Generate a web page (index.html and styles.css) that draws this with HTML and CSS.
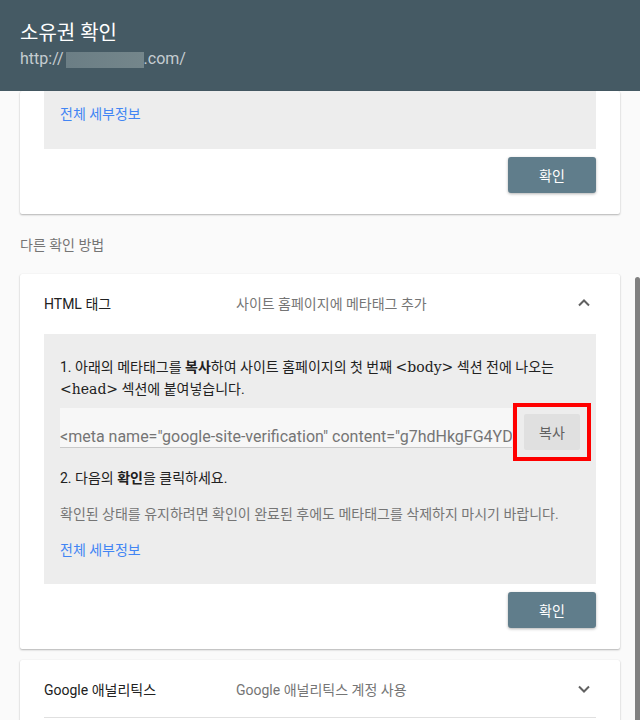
FILE: index.html
```html
<!DOCTYPE html>
<html lang="ko">
<head>
<meta charset="utf-8">
<link rel="stylesheet" href="styles.css">
</head>
<body>
<header class="topbar">
  <h1 class="title">소유권 확인</h1>
  <div class="url">http://<span class="blur"></span>.com/</div>
</header>
<main class="content">
  <section class="card">
    <div class="panel panel-top">
      <a class="link" href="#">전체 세부정보</a>
    </div>
    <div class="actions"><button class="btn">확인</button></div>
  </section>

  <div class="section-label">다른 확인 방법</div>

  <section class="card">
    <div class="card-head card-head-open">
      <span class="head-name">HTML 태그</span>
      <span class="head-desc">사이트 홈페이지에 메타태그 추가</span>
      <svg class="chev" width="14" height="14" viewBox="0 0 14 14"><path d="M2 9.5 L7 4.5 L12 9.5" fill="none" stroke="#616161" stroke-width="2"/></svg>
    </div>
    <div class="panel panel-main">
      <p class="step">1. 아래의 메타태그를 <b>복사</b>하여 사이트 홈페이지의 첫 번째 <code>&lt;body&gt;</code> 섹션 전에 나오는 <code>&lt;head&gt;</code> 섹션에 붙여넣습니다.</p>
      <div class="copy-row">
        <div class="field">&lt;meta name="google-site-verification" content="g7hdHkgFG4YDqz1Lx9w0uTnR5sKpQe2aVbMcXyZ3iO8" /&gt;</div>
        <div class="copy-wrap">
          <button class="copy-btn">복사</button>
          <span class="highlight"></span>
        </div>
      </div>
      <p class="step step2">2. 다음의 <b>확인</b>을 클릭하세요.</p>
      <p class="note">확인된 상태를 유지하려면 확인이 완료된 후에도 메타태그를 삭제하지 마시기 바랍니다.</p>
      <a class="link" href="#">전체 세부정보</a>
    </div>
    <div class="actions"><button class="btn">확인</button></div>
  </section>

  <section class="card card-collapsed">
    <div class="card-head card-head-border">
      <span class="head-name">Google 애널리틱스</span>
      <span class="head-desc">Google 애널리틱스 계정 사용</span>
      <svg class="chev" width="14" height="14" viewBox="0 0 14 14"><path d="M2 4.5 L7 9.5 L12 4.5" fill="none" stroke="#616161" stroke-width="2"/></svg>
    </div>
    <div class="spacer"></div>
  </section>
</main>
<div class="scroll-thumb"></div>
</body>
</html>
```

FILE: styles.css
```css
html, body {
  margin: 0;
  padding: 0;
  height: 720px;
  overflow: hidden;
}
body {
  background: #fafafa;
  font-family: Roboto, "Noto Sans CJK KR", sans-serif;
  color: #212121;
  position: relative;
}
.topbar {
  background: #455a64;
  height: 91px;
  box-sizing: border-box;
  padding: 19px 20px 0;
}
.title {
  margin: 0;
  font-size: 20px;
  line-height: 28px;
  font-weight: 400;
  color: #ffffff;
}
.url {
  font-size: 16px;
  line-height: 24px;
  color: #c5cdd1;
  display: flex;
  align-items: center;
}
.blur {
  display: inline-block;
  width: 78px;
  height: 16px;
  background: linear-gradient(90deg, #6b7e85, #74868b);
  margin: 2px 0 0 2px;
}
.content {
  padding: 0 20px;
}
.card {
  background: #ffffff;
  box-shadow: 0 1px 2px rgba(0,0,0,0.28), 0 0 1px rgba(0,0,0,0.08);
  border-radius: 2px;
  padding: 0 24px 21px;
  margin-bottom: 11px;
}
.panel {
  background: #ededed;
  padding: 0 16px;
}
.panel-top {
  padding-top: 12px;
  padding-bottom: 24px;
}
.link {
  display: block;
  font-size: 14px;
  line-height: 22px;
  color: #4285f4;
  text-decoration: none;
}
.actions {
  display: flex;
  justify-content: flex-end;
  margin-top: 8px;
}
.btn {
  width: 88px;
  height: 36px;
  border: none;
  border-radius: 3px;
  background: #607d8b;
  color: #ffffff;
  font-family: Roboto, "Noto Sans CJK KR", sans-serif;
  font-size: 14px;
  box-shadow: 0 1px 3px rgba(0,0,0,0.3);
}
.section-label {
  font-size: 14px;
  line-height: 20px;
  color: #757575;
  margin: 21px 0 19px;
}
.card-head {
  height: 56px;
  display: flex;
  align-items: center;
  font-size: 14px;
}
.card-head-open {
  height: 57px;
}
.head-name {
  width: 192px;
  color: #212121;
}
.head-desc {
  flex: 1;
  color: #757575;
}
.chev {
  margin-right: 5px;
}
.panel-main {
  margin-top: 3px;
  padding-top: 22px;
  padding-bottom: 23px;
}
.step {
  margin: 0;
  font-size: 14px;
  line-height: 22px;
  color: #212121;
}
.step b {
  font-weight: 700;
}
code {
  font-family: "DejaVu Serif", serif;
  font-size: 14px;
}
.copy-row {
  display: flex;
  align-items: flex-start;
  gap: 12px;
  margin-top: 8px;
}
.field {
  width: 452px;
  height: 40px;
  box-sizing: border-box;
  padding-top: 19px;
  background: #f7f7f7;
  border-bottom: 1px solid #c9c9c9;
  font-size: 16px;
  line-height: 20px;
  color: #757575;
  white-space: nowrap;
  overflow: hidden;
}
.copy-wrap {
  position: relative;
  margin-top: 6px;
}
.copy-btn {
  display: block;
  width: 56px;
  height: 36px;
  border: none;
  border-radius: 2px;
  background: #e0e0e0;
  color: #616161;
  font-family: Roboto, "Noto Sans CJK KR", sans-serif;
  font-size: 14px;
}
.highlight {
  position: absolute;
  top: -11px;
  left: -11px;
  right: -11px;
  bottom: -11px;
  border: 4px solid #ff0000;
}
.step2 {
  margin-top: 17px;
}
.note {
  margin: 14px 0 14px;
  font-size: 14px;
  line-height: 22px;
  color: #757575;
}
.card-head-border {
  height: 57px;
  border-bottom: 1px solid #e0e0e0;
}
.spacer {
  height: 40px;
}
.scroll-thumb {
  position: absolute;
  right: 0;
  top: 277px;
  bottom: 0;
  width: 5px;
  background: #808080;
  border-radius: 3px 3px 0 0;
}
```
